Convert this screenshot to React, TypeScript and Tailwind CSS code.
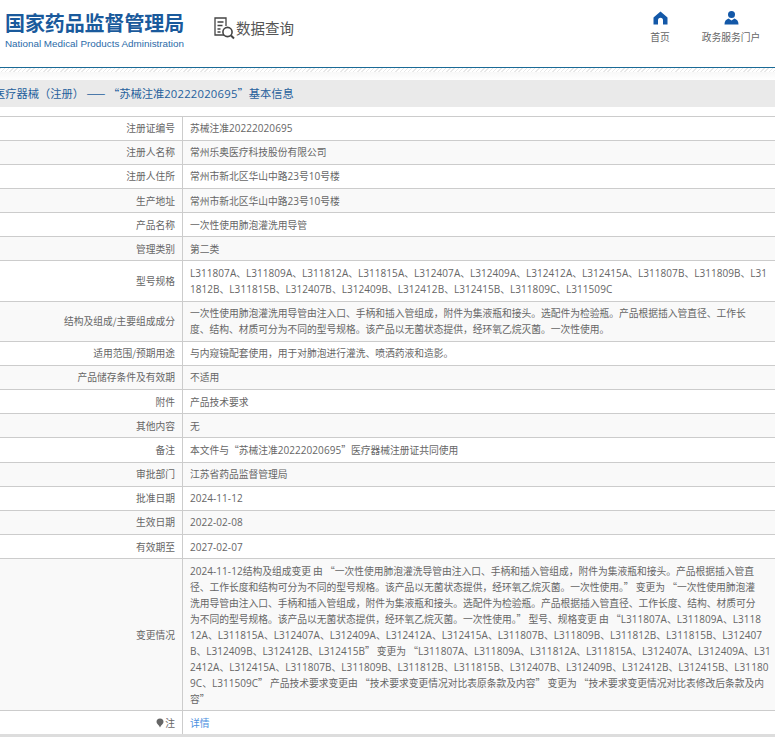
import React from "react";

const font = { fontFamily: '"Noto Sans CJK SC", sans-serif' };

type Row = { label: React.ReactNode; lines: string[] };

const rows: Row[] = [
  { label: "注册证编号", lines: ["苏械注准20222020695"] },
  { label: "注册人名称", lines: ["常州乐奥医疗科技股份有限公司"] },
  { label: "注册人住所", lines: ["常州市新北区华山中路23号10号楼"] },
  { label: "生产地址", lines: ["常州市新北区华山中路23号10号楼"] },
  { label: "产品名称", lines: ["一次性使用肺泡灌洗用导管"] },
  { label: "管理类别", lines: ["第二类"] },
  {
    label: "型号规格",
    lines: [
      "L311807A、L311809A、L311812A、L311815A、L312407A、L312409A、L312412A、L312415A、L311807B、L311809B、L31",
      "1812B、L311815B、L312407B、L312409B、L312412B、L312415B、L311809C、L311509C",
    ],
  },
  {
    label: "结构及组成/主要组成成分",
    lines: [
      "一次性使用肺泡灌洗用导管由注入口、手柄和插入管组成，附件为集液瓶和接头。选配件为检验瓶。产品根据插入管直径、工作长",
      "度、结构、材质可分为不同的型号规格。该产品以无菌状态提供，经环氧乙烷灭菌。一次性使用。",
    ],
  },
  { label: "适用范围/预期用途", lines: ["与内窥镜配套使用，用于对肺泡进行灌洗、喷洒药液和造影。"] },
  { label: "产品储存条件及有效期", lines: ["不适用"] },
  { label: "附件", lines: ["产品技术要求"] },
  { label: "其他内容", lines: ["无"] },
  { label: "备注", lines: ["本文件与“苏械注准20222020695”医疗器械注册证共同使用"] },
  { label: "审批部门", lines: ["江苏省药品监督管理局"] },
  { label: "批准日期", lines: ["2024-11-12"] },
  { label: "生效日期", lines: ["2022-02-08"] },
  { label: "有效期至", lines: ["2027-02-07"] },
  {
    label: "变更情况",
    lines: [
      "2024-11-12结构及组成变更 由 “一次性使用肺泡灌洗导管由注入口、手柄和插入管组成，附件为集液瓶和接头。产品根据插入管直",
      "径、工作长度和结构可分为不同的型号规格。该产品以无菌状态提供，经环氧乙烷灭菌。一次性使用。” 变更为 “一次性使用肺泡灌",
      "洗用导管由注入口、手柄和插入管组成，附件为集液瓶和接头。选配件为检验瓶。产品根据插入管直径、工作长度、结构、材质可分",
      "为不同的型号规格。该产品以无菌状态提供，经环氧乙烷灭菌。一次性使用。” 型号、规格变更 由 “L311807A、L311809A、L3118",
      "12A、L311815A、L312407A、L312409A、L312412A、L312415A、L311807B、L311809B、L311812B、L311815B、L312407",
      "B、L312409B、L312412B、L312415B” 变更为 “L311807A、L311809A、L311812A、L311815A、L312407A、L312409A、L31",
      "2412A、L312415A、L311807B、L311809B、L311812B、L311815B、L312407B、L312409B、L312412B、L312415B、L31180",
      "9C、L311509C” 产品技术要求变更由 “技术要求变更情况对比表原条款及内容” 变更为 “技术要求变更情况对比表修改后条款及内",
      "容”",
    ],
  },
];

const latin = { fontFamily: '"Open Sans", sans-serif' };

function Mixed({ text }: { text: string }) {
  return (
    <>
      {text.split(/([A-Za-z0-9-]+)/).map((p, i) =>
        i % 2 === 1 ? (
          <span key={i} className="text-[10px] tracking-[0.05px]" style={latin}>
            {p}
          </span>
        ) : (
          <React.Fragment key={i}>{p}</React.Fragment>
        )
      )}
    </>
  );
}

function TableRow({ row, index }: { row: Row; index: number }) {
  return (
    <div className={`flex border-b border-[#cccccc] ${index % 2 === 1 ? "bg-[#f9f9f9]" : "bg-white"}`}>
      <div className="w-[183px] shrink-0 flex items-center justify-end pr-[7px] border-r border-[#cccccc]">
        <span>{row.label}</span>
      </div>
      <div className="flex-1 pl-[7px] py-[3.58px] whitespace-nowrap overflow-hidden">
        {row.lines.map((l, i) => (
          <div key={i} className="h-[16px]">
            <Mixed text={l} />
          </div>
        ))}
      </div>
    </div>
  );
}

export default function App() {
  return (
    <div className="w-[775px] h-[740px] overflow-hidden bg-white text-[9.75px] leading-[16px] text-[#666666]" style={font}>
      <header className="h-[67px] flex items-start">
        <div className="ml-[5px] mt-[10px] w-[180px]">
          <div className="text-[20px] leading-[26px] font-bold text-[#1a5a9c] whitespace-nowrap tracking-[-0.1px]">
            国家药品监督管理局
          </div>
          <div className="text-[9.85px] leading-[13px] mt-[1px] text-[#2a6aa8] whitespace-nowrap" style={{ fontFamily: '"Liberation Sans", sans-serif' }}>
            National Medical Products Administration
          </div>
        </div>
        <div className="ml-[28px] mt-[16px] flex items-center">
          <svg width="23" height="24" viewBox="0 0 23 24" fill="none" stroke="#444444" strokeWidth="1.3">
            <path d="M11 19H2V2h11v8" />
            <path d="M4.5 6h6M4.5 9.5h5M4.5 13h3M4.5 16h3" />
            <circle cx="14.5" cy="16" r="4.6" strokeWidth="1.6" />
            <path d="M18 19.5l3 3" strokeWidth="2" />
          </svg>
          <span className="text-[14.5px] leading-[20px] text-[#555555] whitespace-nowrap">数据查询</span>
        </div>
        <div className="ml-auto flex mr-[14px] mt-[11px]">
          <div className="flex flex-col items-center w-[20px] mr-[31px]">
            <svg width="15" height="14" viewBox="0 0 15 14" fill="#1358a8">
              <path d="M7.5 0.5L14.5 6.5V13.5H10V9.3a2.5 2.5 0 0 0-5 0V13.5H0.5V6.5z" />
            </svg>
            <span className="mt-[4px] whitespace-nowrap">首页</span>
          </div>
          <div className="flex flex-col items-center w-[60px]">
            <svg width="15" height="14" viewBox="0 0 15 14" fill="#1358a8">
              <circle cx="7.5" cy="3.6" r="3.5" />
              <path d="M0.5 13.5c0-3.4 1.5-5 4-6l3 2 3-2c2.500 1 4 2.600 4 6z" />
            </svg>
            <span className="mt-[4px] whitespace-nowrap">政务服务门户</span>
          </div>
        </div>
      </header>
      <div className="h-[13px] border-t border-[#1a6a96]">
        <div className="h-[4px] bg-[repeating-linear-gradient(135deg,#e8e8e8_0,#e8e8e8_1px,#ffffff_1px,#ffffff_3px)]" />
        <div className="h-[8px] bg-gradient-to-b from-[#f8f8f8] to-white" />
      </div>
      <div className="h-[27px] bg-[#eaeaea] flex items-center text-[#1f5f9c] text-[11.25px] whitespace-nowrap overflow-hidden">
        <span className="-ml-[6px]">
          医疗器械（注册） —— “苏械注准<span className="text-[11.25px] tracking-[0.24px]" style={latin}>20222020695</span>”基本信息
        </span>
      </div>
      <div className="mt-[8.5px] border-t border-[#cccccc]">
        {rows.map((r, i) => (
          <TableRow key={i} row={r} index={i} />
        ))}
        <div className="flex bg-white border-b-[3px] border-[#dddddd]">
          <div className="w-[183px] shrink-0 flex items-center justify-end pr-[7px] border-r border-[#cccccc]">
            <svg width="8" height="10" viewBox="0 0 8 10" fill="#666666" className="mr-[1px]">
              <path d="M4 0.500a3.500 3.500 0 0 1 3.500 3.500c0 2-2.500 3-3.500 5.500C3 7 0.500 6 0.500 4A3.500 3.500 0 0 1 4 0.500z" />
            </svg>
            <span>注</span>
          </div>
          <div className="flex-1 pl-[7px] py-[3.58px] text-[#4a8fe0]">详情</div>
        </div>
      </div>
    </div>
  );
}
